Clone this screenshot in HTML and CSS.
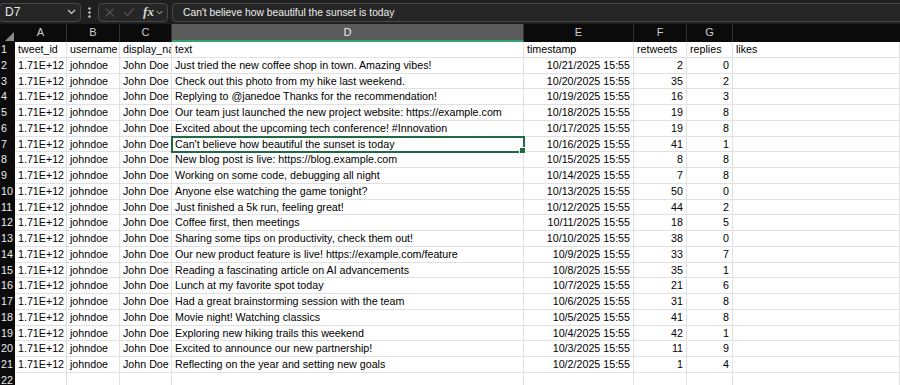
FILE: index.html
```html
<!DOCTYPE html>
<html lang="en">
<head>
    <meta charset="UTF-8">
    <title>tweets.csv - Excel</title>
    <link rel="stylesheet" href="styles.css">
</head>
<body>
    <div class="formula-bar">
        <div class="name-box">
            <span>D7</span>
            <svg class="chev" width="9" height="6" viewBox="0 0 9 6"><path d="M1 1l3.5 3.5L8 1" fill="none" stroke="#d0d0d0" stroke-width="1.2"/></svg>
        </div>
        <svg class="dots" width="3" height="11" viewBox="0 0 3 11"><circle cx="1.5" cy="1.5" r="1.2" fill="#cfcfcf"/><circle cx="1.5" cy="5.5" r="1.2" fill="#cfcfcf"/><circle cx="1.5" cy="9.5" r="1.2" fill="#cfcfcf"/></svg>
        <div class="fx-box">
            <svg width="11" height="11" viewBox="0 0 11 11"><path d="M1 1l9 9M10 1l-9 9" stroke="#6f6f6f" stroke-width="1.1"/></svg>
            <svg width="13" height="10" viewBox="0 0 13 10"><path d="M1 5l4 4 7-8" fill="none" stroke="#6f6f6f" stroke-width="1.1"/></svg>
            <span class="fx">fx</span>
            <svg width="8" height="5" viewBox="0 0 8 5"><path d="M1 1l3 3 3-3" fill="none" stroke="#c8c8c8" stroke-width="1.1"/></svg>
        </div>
        <div class="formula-input">Can't believe how beautiful the sunset is today</div>
    </div>

    <table class="sheet">
        <thead>
            <tr>
                <th class="corner"><svg width="9" height="9" viewBox="0 0 9 9"><path d="M9 0v9H0z" fill="#8a8a8a"/></svg></th>
                <th>A</th><th>B</th><th>C</th><th class="col-active">D</th><th>E</th><th>F</th><th>G</th><th class="blank"></th>
            </tr>
        </thead>
        <tbody>
            <tr><th>1</th><td>tweet_id</td><td>username</td><td>display_na</td><td>text</td><td>timestamp</td><td>retweets</td><td>replies</td><td>likes</td></tr>
            <tr><th>2</th><td class="num">1.71E+12</td><td>johndoe</td><td>John Doe</td><td>Just tried the new coffee shop in town. Amazing vibes!</td><td class="num">10/21/2025 15:55</td><td class="num">2</td><td class="num">0</td><td></td></tr>
            <tr><th>3</th><td class="num">1.71E+12</td><td>johndoe</td><td>John Doe</td><td>Check out this photo from my hike last weekend.</td><td class="num">10/20/2025 15:55</td><td class="num">35</td><td class="num">2</td><td></td></tr>
            <tr><th>4</th><td class="num">1.71E+12</td><td>johndoe</td><td>John Doe</td><td>Replying to @janedoe Thanks for the recommendation!</td><td class="num">10/19/2025 15:55</td><td class="num">16</td><td class="num">3</td><td></td></tr>
            <tr><th>5</th><td class="num">1.71E+12</td><td>johndoe</td><td>John Doe</td><td>Our team just launched the new project website: https://example.com</td><td class="num">10/18/2025 15:55</td><td class="num">19</td><td class="num">8</td><td></td></tr>
            <tr><th>6</th><td class="num">1.71E+12</td><td>johndoe</td><td>John Doe</td><td>Excited about the upcoming tech conference! #Innovation</td><td class="num">10/17/2025 15:55</td><td class="num">19</td><td class="num">8</td><td></td></tr>
            <tr><th>7</th><td class="num">1.71E+12</td><td>johndoe</td><td>John Doe</td><td class="active">Can't believe how beautiful the sunset is today</td><td class="num">10/16/2025 15:55</td><td class="num">41</td><td class="num">1</td><td></td></tr>
            <tr><th>8</th><td class="num">1.71E+12</td><td>johndoe</td><td>John Doe</td><td>New blog post is live: https://blog.example.com</td><td class="num">10/15/2025 15:55</td><td class="num">8</td><td class="num">8</td><td></td></tr>
            <tr><th>9</th><td class="num">1.71E+12</td><td>johndoe</td><td>John Doe</td><td>Working on some code, debugging all night</td><td class="num">10/14/2025 15:55</td><td class="num">7</td><td class="num">8</td><td></td></tr>
            <tr><th>10</th><td class="num">1.71E+12</td><td>johndoe</td><td>John Doe</td><td>Anyone else watching the game tonight?</td><td class="num">10/13/2025 15:55</td><td class="num">50</td><td class="num">0</td><td></td></tr>
            <tr><th>11</th><td class="num">1.71E+12</td><td>johndoe</td><td>John Doe</td><td>Just finished a 5k run, feeling great!</td><td class="num">10/12/2025 15:55</td><td class="num">44</td><td class="num">2</td><td></td></tr>
            <tr><th>12</th><td class="num">1.71E+12</td><td>johndoe</td><td>John Doe</td><td>Coffee first, then meetings</td><td class="num">10/11/2025 15:55</td><td class="num">18</td><td class="num">5</td><td></td></tr>
            <tr><th>13</th><td class="num">1.71E+12</td><td>johndoe</td><td>John Doe</td><td>Sharing some tips on productivity, check them out!</td><td class="num">10/10/2025 15:55</td><td class="num">38</td><td class="num">0</td><td></td></tr>
            <tr><th>14</th><td class="num">1.71E+12</td><td>johndoe</td><td>John Doe</td><td>Our new product feature is live! https://example.com/feature</td><td class="num">10/9/2025 15:55</td><td class="num">33</td><td class="num">7</td><td></td></tr>
            <tr><th>15</th><td class="num">1.71E+12</td><td>johndoe</td><td>John Doe</td><td>Reading a fascinating article on AI advancements</td><td class="num">10/8/2025 15:55</td><td class="num">35</td><td class="num">1</td><td></td></tr>
            <tr><th>16</th><td class="num">1.71E+12</td><td>johndoe</td><td>John Doe</td><td>Lunch at my favorite spot today</td><td class="num">10/7/2025 15:55</td><td class="num">21</td><td class="num">6</td><td></td></tr>
            <tr><th>17</th><td class="num">1.71E+12</td><td>johndoe</td><td>John Doe</td><td>Had a great brainstorming session with the team</td><td class="num">10/6/2025 15:55</td><td class="num">31</td><td class="num">8</td><td></td></tr>
            <tr><th>18</th><td class="num">1.71E+12</td><td>johndoe</td><td>John Doe</td><td>Movie night! Watching classics</td><td class="num">10/5/2025 15:55</td><td class="num">41</td><td class="num">8</td><td></td></tr>
            <tr><th>19</th><td class="num">1.71E+12</td><td>johndoe</td><td>John Doe</td><td>Exploring new hiking trails this weekend</td><td class="num">10/4/2025 15:55</td><td class="num">42</td><td class="num">1</td><td></td></tr>
            <tr><th>20</th><td class="num">1.71E+12</td><td>johndoe</td><td>John Doe</td><td>Excited to announce our new partnership!</td><td class="num">10/3/2025 15:55</td><td class="num">11</td><td class="num">9</td><td></td></tr>
            <tr><th>21</th><td class="num">1.71E+12</td><td>johndoe</td><td>John Doe</td><td>Reflecting on the year and setting new goals</td><td class="num">10/2/2025 15:55</td><td class="num">1</td><td class="num">4</td><td></td></tr>
            <tr><th>22</th><td></td><td></td><td></td><td></td><td></td><td></td><td></td><td></td></tr>
        </tbody>
    </table>
</body>
</html>
```

FILE: styles.css
```css
* {
    margin: 0;
    padding: 0;
    box-sizing: border-box;
}

body {
    font-family: 'Liberation Sans', Arial, sans-serif;
    background: #ffffff;
    overflow: hidden;
}

/* formula bar */

.formula-bar {
    display: flex;
    align-items: center;
    height: 24px;
    padding: 2px 0 2px 0;
    background: #1f1f1f;
    color: #e6e6e6;
    font-size: 12px;
}

.name-box {
    display: flex;
    align-items: center;
    justify-content: space-between;
    width: 82px;
    height: 19px;
    margin-left: -1px;
    padding: 0 4px 0 5px;
    background: #262626;
    border: 1px solid #4a4a4a;
    border-radius: 4px;
}

.dots {
    margin: 0 7px 0 7px;
}

.fx-box {
    display: flex;
    align-items: center;
    gap: 8px;
    width: 70px;
    height: 19px;
    padding: 0 4px 0 6px;
    background: #262626;
    border: 1px solid #4a4a4a;
    border-radius: 4px;
}

.fx {
    font-family: 'Liberation Serif', serif;
    font-style: italic;
    font-weight: bold;
    font-size: 13px;
    color: #d6d6d6;
    margin-left: 1px;
    margin-right: -6px;
}

.formula-input {
    flex: 1;
    height: 19px;
    margin-left: 4px;
    margin-right: -4px;
    padding: 2px 10px;
    background: #262626;
    border: 1px solid #4a4a4a;
    border-radius: 4px;
    font-size: 10.3px;
    line-height: 14px;
    color: #ececec;
}

/* grid */

.sheet {
    display: grid;
    grid-template-columns: 15px 52px 53px 52px 352px 110px 53px 46px 1fr;
    grid-template-rows: 18px;
    grid-auto-rows: 15.75px;
    width: 100%;
    border-spacing: 0;
    font-size: 10.7px;
    color: #000;
}

.sheet thead,
.sheet tbody,
.sheet tr {
    display: contents;
}

.sheet th,
.sheet td {
    display: block;
    white-space: nowrap;
    overflow: hidden;
}

.sheet thead th {
    background: #0b0b0b;
    color: #cfcfcf;
    font-weight: normal;
    font-size: 11px;
    line-height: 17px;
    text-align: center;
    border-right: 1px solid #333;
}

.sheet thead th.corner {
    position: relative;
    border-right: none;
}

.corner svg {
    position: absolute;
    right: 1px;
    bottom: 1px;
}

.sheet thead th.col-active {
    background: #5b5b5b;
    color: #e8e8e8;
    border-bottom: 2px solid #33a36b;
}

.sheet thead th.blank {
    border-right: none;
}

.sheet tbody th {
    background: #0b0b0b;
    color: #ececec;
    font-weight: normal;
    line-height: 15px;
    text-align: left;
    padding-left: 1px;
}

.sheet td {
    padding: 0 2px 0 3px;
    line-height: 15px;
    border-right: 1px solid #e1e1e1;
    border-bottom: 1px solid #e1e1e1;
}

.sheet td.num {
    text-align: right;
    padding-right: 3px;
}

.sheet td.active {
    position: relative;
    outline: 2px solid #1e6b41;
    outline-offset: -1px;
    overflow: visible;
}

.sheet td.active::after {
    content: "";
    position: absolute;
    right: -3px;
    bottom: -3px;
    width: 5px;
    height: 5px;
    background: #1e6b41;
    border: 1px solid #fff;
}
```
